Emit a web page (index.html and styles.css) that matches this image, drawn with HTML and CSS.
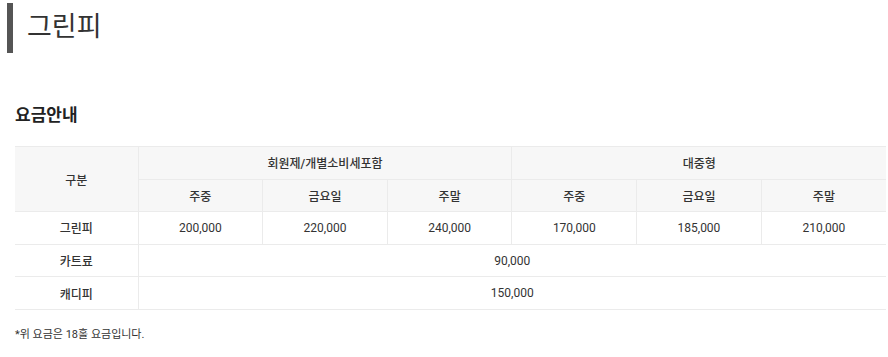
FILE: index.html
```html
<!DOCTYPE html>
<html lang="ko">
<head>
<meta charset="utf-8">
<link rel="stylesheet" href="styles.css">
</head>
<body>
<div class="page">
  <h1 class="title">그린피</h1>
  <h2 class="subtitle">요금안내</h2>
  <table class="fee">
    <colgroup>
      <col class="c-first">
      <col><col><col><col><col><col>
    </colgroup>
    <thead>
      <tr>
        <th rowspan="2">구분</th>
        <th colspan="3">회원제/개별소비세포함</th>
        <th colspan="3">대중형</th>
      </tr>
      <tr>
        <th>주중</th><th>금요일</th><th>주말</th>
        <th>주중</th><th>금요일</th><th>주말</th>
      </tr>
    </thead>
    <tbody>
      <tr>
        <th>그린피</th>
        <td>200,000</td><td>220,000</td><td>240,000</td>
        <td>170,000</td><td>185,000</td><td>210,000</td>
      </tr>
      <tr>
        <th>카트료</th>
        <td colspan="6">90,000</td>
      </tr>
      <tr>
        <th>캐디피</th>
        <td colspan="6">150,000</td>
      </tr>
    </tbody>
  </table>
  <p class="note">*위 요금은 18홀 요금입니다.</p>
</div>
</body>
</html>
```
FILE: styles.css
```css
html, body {
  margin: 0;
  padding: 0;
  background: #fff;
}
body {
  font-family: Roboto, "Noto Sans CJK KR", sans-serif;
  color: #333;
}
.page {
  padding: 3px 2px 0 15px;
}
.title {
  margin: 0 0 0 -8px;
  height: 50px;
  border-left: 6px solid #555;
  padding-left: 14px;
  font-size: 27px;
  font-weight: 400;
  line-height: 48px;
  color: #333;
}
.subtitle {
  margin: 50px 0 0;
  font-size: 17px;
  font-weight: 700;
  line-height: 24px;
  color: #222;
}
.fee {
  margin-top: 19px;
  width: 871px;
  border-collapse: collapse;
  table-layout: fixed;
  font-size: 12px;
}
.c-first { width: 123px; }
.fee th, .fee td {
  height: 31.6px;
  padding: 0;
  text-align: center;
  vertical-align: middle;
  border: 1px solid #ebebeb;
}
.fee tr > :first-child { border-left: none; }
.fee tr > :last-child { border-right: none; }
.fee thead th {
  background: #f7f7f7;
  font-weight: 500;
  color: #333;
}
.fee tbody th {
  font-weight: 500;
  background: #fff;
  color: #333;
}
.fee td {
  color: #333;
}
.note {
  margin: 15px 0 0;
  font-size: 11px;
  color: #333;
}
```
